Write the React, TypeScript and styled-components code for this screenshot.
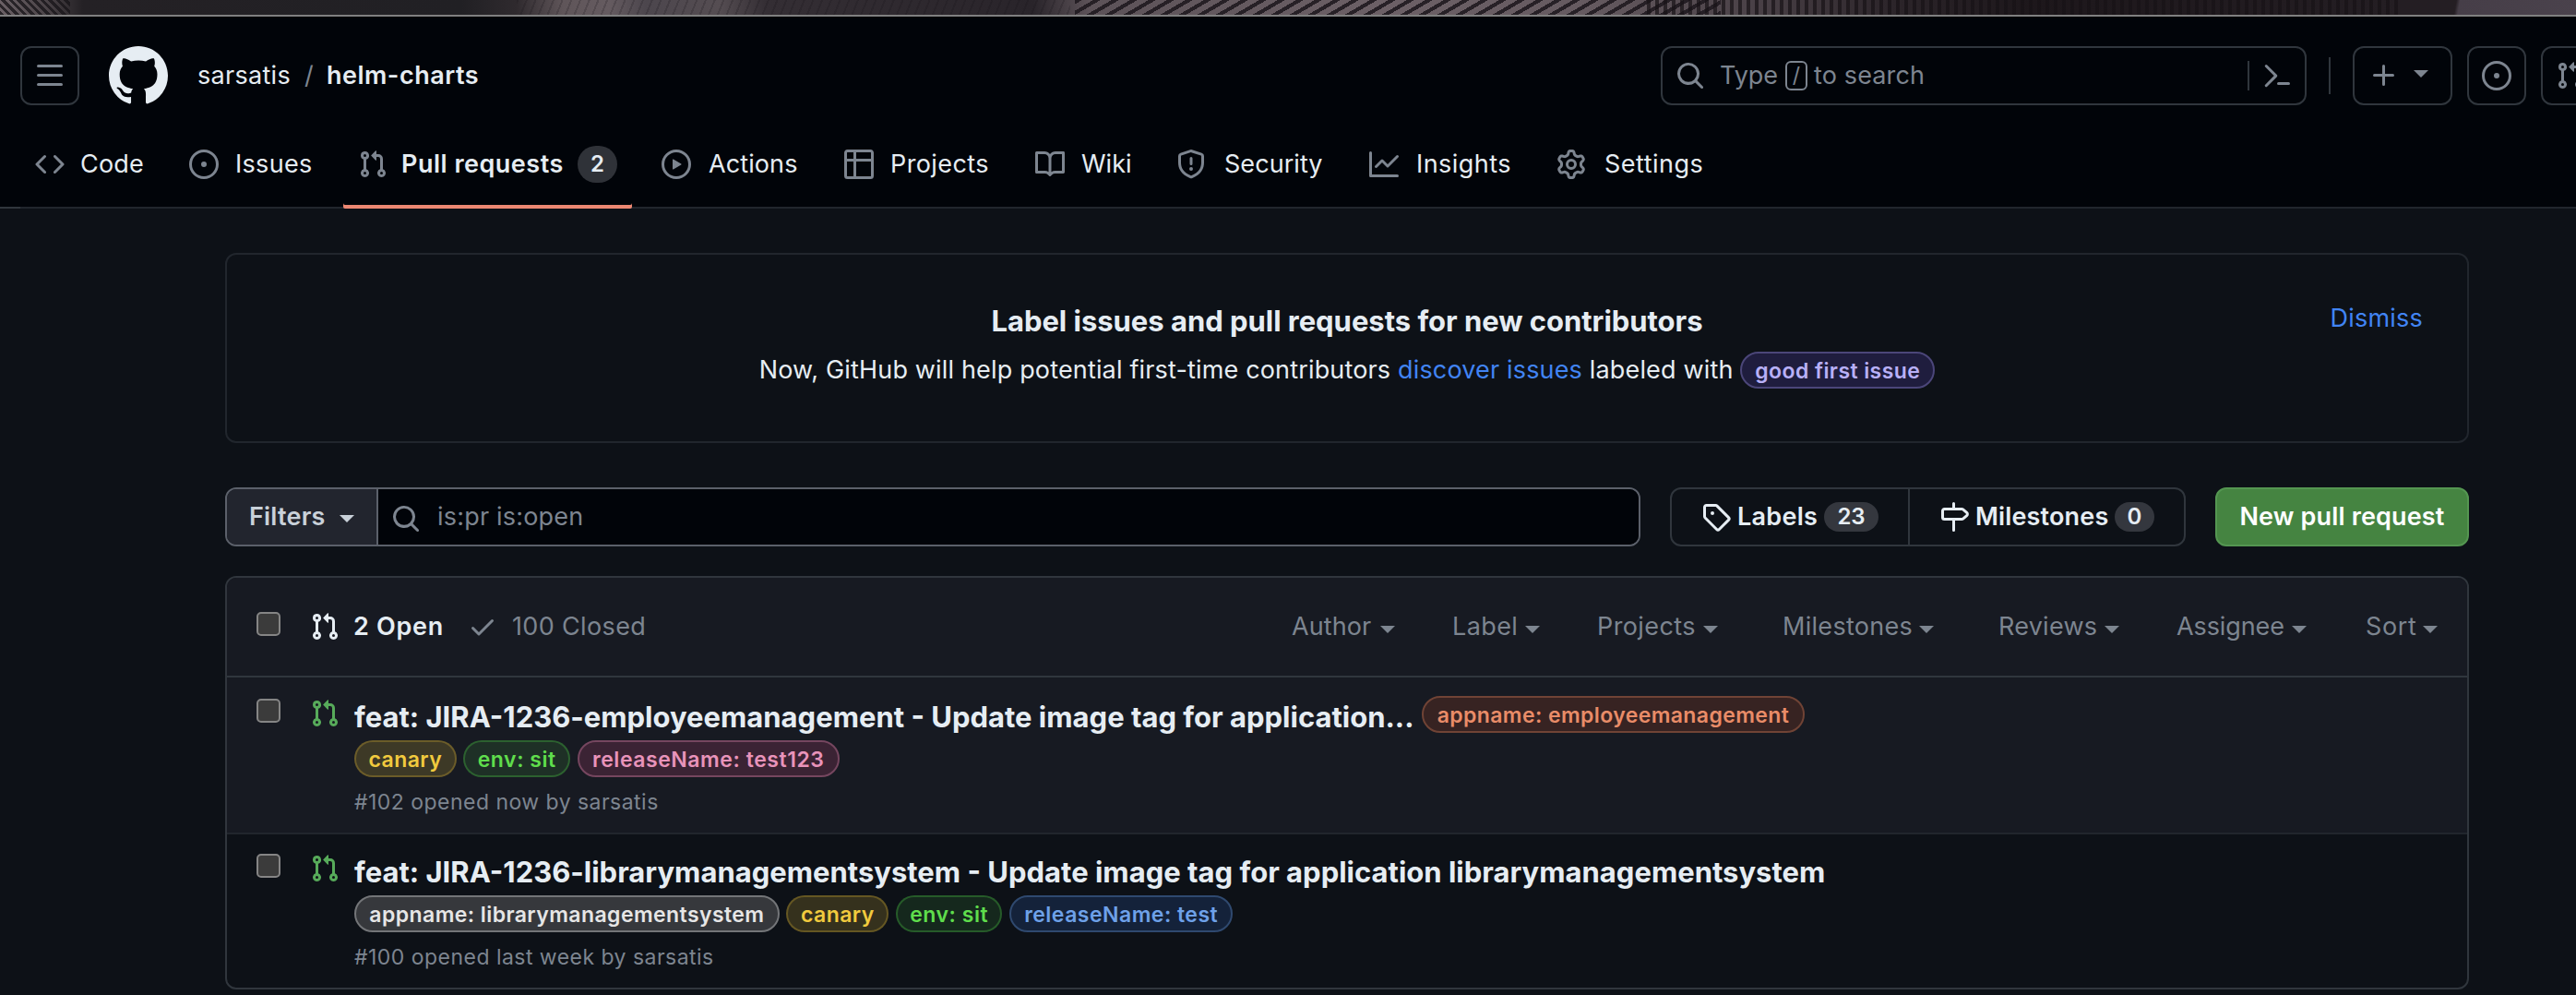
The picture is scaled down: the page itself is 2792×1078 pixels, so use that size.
import React from "react";
import styled, { createGlobalStyle, css } from "styled-components";

const color = {
  canvas: "#0d1117",
  inset: "#010409",
  subtle: "#171a22",
  border: "#30363d",
  borderMuted: "#21262d",
  fg: "#e6edf3",
  muted: "#7d8590",
  link: "#4184f4",
  open: "#57ab5a",
};

const GlobalStyle = createGlobalStyle`
  *, *::before, *::after { box-sizing: border-box; }
  body {
    margin: 0;
    overflow: hidden;
    background: ${color.canvas};
    color: ${color.fg};
    font-family: Inter, "Liberation Sans", sans-serif;
    font-size: 27px;
    line-height: 40px;
  }
`;

/* ---------- icons ---------- */

const paths = {
  bars: "M1 2.75A.75.75 0 0 1 1.75 2h12.5a.75.75 0 0 1 0 1.5H1.75A.75.75 0 0 1 1 2.75Zm0 5A.75.75 0 0 1 1.75 7h12.5a.75.75 0 0 1 0 1.5H1.75A.75.75 0 0 1 1 7.75ZM1.75 12h12.5a.75.75 0 0 1 0 1.5H1.75a.75.75 0 0 1 0-1.5Z",
  mark: "M8 0c4.42 0 8 3.58 8 8a8.013 8.013 0 0 1-5.45 7.59c-.4.08-.55-.17-.55-.38 0-.27.01-1.13.01-2.2 0-.75-.25-1.23-.54-1.48 1.78-.2 3.65-.88 3.65-3.95 0-.88-.31-1.59-.82-2.15.08-.2.36-1.02-.08-2.12 0 0-.67-.22-2.2.82-.64-.18-1.32-.27-2-.27-.68 0-1.36.09-2 .27-1.53-1.03-2.2-.82-2.2-.82-.44 1.1-.16 1.92-.08 2.12-.51.56-.82 1.28-.82 2.15 0 3.06 1.86 3.75 3.64 3.95-.23.2-.44.55-.51 1.07-.46.21-1.61.55-2.33-.66-.15-.24-.6-.83-1.23-.82-.67.01-.27.38.01.53.34.19.73.9.82 1.13.16.45.68 1.31 2.69.94 0 .67.01 1.3.01 1.49 0 .21-.15.45-.55.38A7.995 7.995 0 0 1 0 8c0-4.42 3.58-8 8-8Z",
  code: "m11.28 3.22 4.25 4.25a.75.75 0 0 1 0 1.06l-4.25 4.25a.749.749 0 0 1-1.275-.326.749.749 0 0 1 .215-.734L13.94 8l-3.72-3.72a.749.749 0 0 1 .326-1.275.749.749 0 0 1 .734.215Zm-6.56 0a.751.751 0 0 1 1.042.018.751.751 0 0 1 .018 1.042L2.06 8l3.72 3.72a.749.749 0 0 1-.326 1.275.749.749 0 0 1-.734-.215L.47 8.53a.75.75 0 0 1 0-1.06Z",
  issue: "M8 9.5a1.5 1.5 0 1 0 0-3 1.5 1.5 0 0 0 0 3ZM8 0a8 8 0 1 1 0 16A8 8 0 0 1 8 0ZM1.5 8a6.5 6.5 0 1 0 13 0 6.5 6.5 0 0 0-13 0Z",
  pull: "M1.5 3.25a2.25 2.25 0 1 1 3 2.122v5.256a2.251 2.251 0 1 1-1.5 0V5.372A2.25 2.25 0 0 1 1.5 3.25Zm5.677-.177L9.573.677A.25.25 0 0 1 10 .854V2.5h1A2.5 2.5 0 0 1 13.5 5v5.628a2.251 2.251 0 1 1-1.5 0V5a1 1 0 0 0-1-1h-1v1.646a.25.25 0 0 1-.427.177L7.177 3.427a.25.25 0 0 1 0-.354ZM3.75 2.5a.75.75 0 1 0 0 1.5.75.75 0 0 0 0-1.5Zm0 9.5a.75.75 0 1 0 0 1.5.75.75 0 0 0 0-1.5Zm8.25.75a.75.75 0 1 0 1.5 0 .75.75 0 0 0-1.5 0Z",
  play: "M8 0a8 8 0 1 1 0 16A8 8 0 0 1 8 0ZM1.5 8a6.5 6.5 0 1 0 13 0 6.5 6.5 0 0 0-13 0Zm4.879-2.773 4.264 2.559a.25.25 0 0 1 0 .428l-4.264 2.559A.25.25 0 0 1 6 10.559V5.442a.25.25 0 0 1 .379-.215Z",
  table: "M0 1.75C0 .784.784 0 1.75 0h12.5C15.216 0 16 .784 16 1.75v12.5A1.75 1.75 0 0 1 14.25 16H1.75A1.75 1.75 0 0 1 0 14.25ZM6.5 6.5v8h7.75a.25.25 0 0 0 .25-.25V6.5Zm8-1.5V1.75a.25.25 0 0 0-.25-.25H6.5V5Zm-13 1.5v7.75c0 .138.112.25.25.25H5v-8ZM5 5V1.5H1.75a.25.25 0 0 0-.25.25V5Z",
  book: "M0 1.75A.75.75 0 0 1 .75 1h4.253c1.227 0 2.317.59 3 1.501A3.743 3.743 0 0 1 11.006 1h4.245a.75.75 0 0 1 .75.75v10.5a.75.75 0 0 1-.75.75h-4.507a2.25 2.25 0 0 0-1.591.659l-.622.621a.75.75 0 0 1-1.06 0l-.622-.621A2.25 2.25 0 0 0 5.258 13H.75a.75.75 0 0 1-.75-.75Zm7.251 10.324.004-5.073-.002-2.253A2.25 2.25 0 0 0 5.003 2.5H1.5v9h3.757a3.75 3.75 0 0 1 1.994.574ZM8.755 4.75l-.004 7.322a3.752 3.752 0 0 1 1.992-.572H14.5v-9h-3.495a2.25 2.25 0 0 0-2.25 2.25Z",
  shield: "M7.467.133a1.748 1.748 0 0 1 1.066 0l5.25 1.68A1.75 1.75 0 0 1 15 3.48V7c0 1.566-.32 3.182-1.303 4.682-.983 1.498-2.585 2.813-5.032 3.855a1.697 1.697 0 0 1-1.33 0c-2.447-1.042-4.049-2.357-5.032-3.855C1.32 10.182 1 8.566 1 7V3.48a1.75 1.75 0 0 1 1.217-1.667Zm.61 1.429a.25.25 0 0 0-.153 0l-5.25 1.68a.25.25 0 0 0-.174.238V7c0 1.358.275 2.666 1.057 3.86.784 1.194 2.121 2.34 4.366 3.297a.196.196 0 0 0 .154 0c2.245-.956 3.582-2.104 4.366-3.298C13.225 9.666 13.5 8.36 13.5 7V3.48a.251.251 0 0 0-.174-.237l-5.25-1.68ZM8.75 4.75v3a.75.75 0 0 1-1.5 0v-3a.75.75 0 0 1 1.5 0ZM9 10.5a1 1 0 1 1-2 0 1 1 0 0 1 2 0Z",
  graph: "M1.5 1.75V13.5h13.75a.75.75 0 0 1 0 1.5H.75a.75.75 0 0 1-.75-.75V1.75a.75.75 0 0 1 1.5 0Zm14.28 2.53-5.25 5.25a.75.75 0 0 1-1.06 0L7 7.06 4.28 9.78a.751.751 0 0 1-1.042-.018.751.751 0 0 1-.018-1.042l3.25-3.25a.75.75 0 0 1 1.06 0L10 7.94l4.72-4.72a.751.751 0 0 1 1.042.018.751.751 0 0 1 .018 1.042Z",
  gear: "M8 0a8.2 8.2 0 0 1 .701.031C9.444.095 9.99.645 10.16 1.29l.288 1.107c.018.066.079.158.212.224.231.114.454.243.668.386.123.082.233.09.299.071l1.103-.303c.644-.176 1.392.021 1.82.63.27.385.506.792.704 1.218.315.675.111 1.422-.364 1.891l-.814.806c-.049.048-.098.147-.088.294.016.257.016.515 0 .772-.01.147.038.246.088.294l.814.806c.475.469.679 1.216.364 1.891a7.977 7.977 0 0 1-.704 1.217c-.428.61-1.176.807-1.82.63l-1.102-.302c-.067-.019-.177-.011-.3.071a5.909 5.909 0 0 1-.668.386c-.133.066-.194.158-.211.224l-.29 1.106c-.168.646-.715 1.196-1.458 1.26a8.006 8.006 0 0 1-1.402 0c-.743-.064-1.289-.614-1.458-1.26l-.289-1.106c-.018-.066-.079-.158-.212-.224a5.738 5.738 0 0 1-.668-.386c-.123-.082-.233-.09-.299-.071l-1.103.303c-.644.176-1.392-.021-1.82-.63a8.12 8.12 0 0 1-.704-1.218c-.315-.675-.111-1.422.363-1.891l.815-.806c.05-.048.098-.147.088-.294a6.214 6.214 0 0 1 0-.772c.01-.147-.038-.246-.088-.294l-.815-.806C.635 6.045.431 5.298.746 4.623a7.92 7.92 0 0 1 .704-1.217c.428-.61 1.176-.807 1.82-.63l1.102.302c.067.019.177.011.3-.071.214-.143.437-.272.668-.386.133-.066.194-.158.211-.224l.29-1.106C6.009.645 6.556.095 7.299.03 7.53.01 7.764 0 8 0Zm-.571 1.525c-.036.003-.108.036-.137.146l-.289 1.105c-.147.561-.549.967-.998 1.189-.173.086-.34.183-.5.29-.417.278-.97.423-1.529.27l-1.103-.303c-.109-.03-.175.016-.195.045-.22.312-.412.644-.573.99-.014.031-.021.11.059.19l.815.806c.411.406.562.957.53 1.456a4.709 4.709 0 0 0 0 .582c.032.499-.119 1.05-.53 1.456l-.815.806c-.081.08-.073.159-.059.19.162.346.353.677.573.989.02.03.085.076.195.046l1.102-.303c.56-.153 1.113-.008 1.53.27.161.107.328.204.501.29.447.222.85.629.997 1.189l.289 1.105c.029.109.101.143.137.146a6.6 6.6 0 0 0 1.142 0c.036-.003.108-.036.137-.146l.289-1.105c.147-.561.549-.967.998-1.189.173-.086.34-.183.5-.29.417-.278.97-.423 1.529-.27l1.103.303c.109.029.175-.016.195-.045.22-.313.411-.644.573-.99.014-.031.021-.11-.059-.19l-.815-.806c-.411-.406-.562-.957-.53-1.456a4.709 4.709 0 0 0 0-.582c-.032-.499.119-1.05.53-1.456l.815-.806c.081-.08.073-.159.059-.19a6.464 6.464 0 0 0-.573-.989c-.02-.03-.085-.076-.195-.046l-1.102.303c-.56.153-1.113.008-1.53-.27a4.44 4.44 0 0 0-.501-.29c-.447-.222-.85-.629-.997-1.189l-.289-1.105c-.029-.11-.101-.143-.137-.146a6.6 6.6 0 0 0-1.142 0ZM11 8a3 3 0 1 1-6 0 3 3 0 0 1 6 0ZM9.5 8a1.5 1.5 0 1 0-3.001.001A1.5 1.5 0 0 0 9.5 8Z",
  search: "M10.68 11.74a6 6 0 0 1-7.922-8.982 6 6 0 0 1 8.982 7.922l3.04 3.04a.749.749 0 0 1-.326 1.275.749.749 0 0 1-.734-.215ZM11.5 7a4.499 4.499 0 1 0-8.997 0A4.499 4.499 0 0 0 11.5 7Z",
  terminal: "m6.354 8.04-4.773 4.773a.75.75 0 1 0 1.061 1.06L7.945 8.57a.75.75 0 0 0 0-1.06L2.642 2.206a.75.75 0 0 0-1.06 1.061L6.353 8.04ZM8.75 11.5a.75.75 0 0 0 0 1.5h5.5a.75.75 0 0 0 0-1.5h-5.5Z",
  plus: "M7.75 2a.75.75 0 0 1 .75.75V7h4.25a.75.75 0 0 1 0 1.5H8.5v4.25a.75.75 0 0 1-1.5 0V8.5H2.75a.75.75 0 0 1 0-1.5H7V2.75A.75.75 0 0 1 7.75 2Z",
  tag: "M1 7.775V2.75C1 1.784 1.784 1 2.75 1h5.025c.464 0 .91.184 1.238.513l6.25 6.25a1.75 1.75 0 0 1 0 2.474l-5.026 5.026a1.75 1.75 0 0 1-2.474 0l-6.25-6.25A1.752 1.752 0 0 1 1 7.775Zm1.5 0c0 .066.026.13.073.177l6.25 6.25a.25.25 0 0 0 .354 0l5.025-5.025a.25.25 0 0 0 0-.354l-6.25-6.25a.25.25 0 0 0-.177-.073H2.75a.25.25 0 0 0-.25.25ZM6 5a1 1 0 1 1 0 2 1 1 0 0 1 0-2Z",
  milestone: "M7.75 0a.75.75 0 0 1 .75.75V3h3.634c.414 0 .814.147 1.13.414l2.07 1.75a1.75 1.75 0 0 1 0 2.672l-2.07 1.75a1.75 1.75 0 0 1-1.13.414H8.5v5.25a.75.75 0 0 1-1.5 0V10H2.75A1.75 1.75 0 0 1 1 8.25v-3.5C1 3.784 1.784 3 2.75 3H7V.75A.75.75 0 0 1 7.75 0Zm4.384 8.5a.25.25 0 0 0 .161-.06l2.07-1.75a.248.248 0 0 0 0-.38l-2.07-1.75a.25.25 0 0 0-.161-.06H2.75a.25.25 0 0 0-.25.25v3.5c0 .138.112.25.25.25h9.384Z",
  check: "M13.78 4.22a.75.75 0 0 1 0 1.06l-7.25 7.25a.75.75 0 0 1-1.06 0L2.22 9.28a.751.751 0 0 1 .018-1.042.751.751 0 0 1 1.042-.018L6 10.94l6.72-6.72a.75.75 0 0 1 1.06 0Z",
};

const Svg = styled.svg<{ $size: number; $tone: string }>`
  display: block;
  flex: none;
  width: ${(p) => p.$size}px;
  height: ${(p) => p.$size}px;
  fill: ${(p) => p.$tone};
`;

function Icon({ name, size = 32, tone = color.muted }: { name: keyof typeof paths; size?: number; tone?: string }) {
  return (
    <Svg viewBox="0 0 16 16" $size={size} $tone={tone} aria-hidden="true">
      <path d={paths[name]} />
    </Svg>
  );
}

/* ---------- shared parts ---------- */

const Text = styled.span<{ $track?: number; $width?: number; $weight?: number; $tone?: string }>`
  flex: none;
  white-space: nowrap;
  letter-spacing: ${(p) => p.$track ?? 0.3}px;
  font-weight: ${(p) => p.$weight ?? 400};
  ${(p) => p.$width && css`width: ${p.$width}px;`}
  ${(p) => p.$tone && css`color: ${p.$tone};`}
`;

const Caret = styled.span`
  flex: none;
  width: 0;
  height: 0;
  border: 8px solid transparent;
  border-top-color: currentColor;
  border-bottom-width: 0;
`;

const Pill = styled.span<{ $width: number; $fg: string; $bg: string; $edge: string; $track?: number }>`
  flex: none;
  width: ${(p) => p.$width}px;
  height: 40px;
  border: 2px solid ${(p) => p.$edge};
  border-radius: 20px;
  background: ${(p) => p.$bg};
  color: ${(p) => p.$fg};
  font-size: 23px;
  font-weight: 600;
  line-height: 38px;
  letter-spacing: ${(p) => p.$track ?? 0.42}px;
  text-align: center;
  white-space: nowrap;
`;

const Counter = styled.span<{ $width: number; $height: number }>`
  flex: none;
  width: ${(p) => p.$width}px;
  height: ${(p) => p.$height}px;
  border-radius: 20px;
  background: #34373e;
  color: ${color.fg};
  font-size: 24px;
  font-weight: 600;
  line-height: ${(p) => p.$height}px;
  text-align: center;
`;

/* ---------- top strip and header ---------- */

const WallpaperStrip = styled.div`
  height: 18px;
  border-bottom: 2px solid #808080;
  background:
    linear-gradient(100deg, transparent 2622px, #463e48 2626px, #4a424c 100%),
    repeating-linear-gradient(90deg, transparent 0 5px, rgba(23, 18, 22, 0.7) 5px 9px) 1780px 0 / 820px 16px no-repeat,
    repeating-linear-gradient(150deg, rgba(32, 26, 32, 0.9) 0 4px, transparent 4px 10px) 1165px 0 / 700px 16px no-repeat,
    repeating-linear-gradient(45deg, rgba(25, 22, 26, 0.8) 0 3px, transparent 3px 6px) 0 0 / 76px 16px no-repeat,
    repeating-linear-gradient(112deg, rgba(20, 16, 22, 0.2) 0 2px, transparent 2px 9px) 560px 0 / 600px 16px no-repeat,
    linear-gradient(90deg, #6a6065 0, #4a4347 50px, #242125 90px, #212024 500px, #2f2a2e 560px, #5f5559 610px, #655b60 660px,
      #4c464d 700px, #554d52 780px, #342e34 830px, #29242a 1120px, #5c5258 1180px, #6c6066 1500px, #655a60 1720px,
      #4a4147 1900px, #2c252a 2050px, #1d171b 2200px, #241e23 2600px);
`;

const Header = styled.header`
  height: 208px;
  background:
    linear-gradient(90deg, ${color.border} 22px, ${color.borderMuted} 22px) 0 100% / 100% 2px no-repeat,
    ${color.inset};
`;

const TopBar = styled.div`
  display: flex;
  align-items: center;
  height: 128px;
  padding-left: 22px;
`;

const HeaderButton = styled.button<{ $width?: number }>`
  flex: none;
  display: flex;
  align-items: center;
  justify-content: center;
  width: ${(p) => p.$width ?? 64}px;
  height: 64px;
  padding: 0;
  border: 2px solid ${color.border};
  border-radius: 12px;
  background: transparent;
  color: ${color.muted};
`;

const PlusCaret = styled(Caret)`
  margin: -4px 8px 0 16px;
`;

const Crumbs = styled.div`
  display: flex;
  flex: none;
  align-items: center;
  width: 1714px;
  padding-left: 32px;
`;

const CrumbTrail = styled.div`
  display: flex;
  padding-left: 32px;
`;

const GlobalSearch = styled.div`
  flex: none;
  display: flex;
  align-items: center;
  width: 700px;
  height: 64px;
  padding: 0 14px;
  border: 2px solid ${color.border};
  border-radius: 12px;
  color: ${color.muted};
`;

const SearchText = styled.div`
  display: flex;
  align-items: center;
  flex: 1;
  padding-left: 16px;
`;

const Key = styled.kbd`
  width: 24px;
  height: 32px;
  margin-right: 7px;
  border: 2px solid ${color.muted};
  border-radius: 6px;
  font: 400 23px/28px Inter, sans-serif;
  text-align: center;
`;

const Rule = styled.span<{ $height: number; $left: number; $right: number }>`
  flex: none;
  width: 2px;
  height: ${(p) => p.$height}px;
  margin: 0 ${(p) => p.$right}px 0 ${(p) => p.$left}px;
  background: ${color.border};
`;

const HeaderActions = styled.div`
  display: flex;
  align-items: center;
  gap: 16px;
`;

const Nav = styled.nav`
  display: flex;
  gap: 16px;
  height: 80px;
  padding-left: 22px;
`;

const NavItem = styled.a<{ $current?: boolean }>`
  flex: none;
  display: flex;
  align-items: center;
  height: 80px;
  padding: 0 16px 16px;
  ${(p) => p.$current && css`
    box-shadow: inset 0 -4px 0 #ec8772;
    border-radius: 2px;
  `}
`;

const NavLabel = styled(Text)<{ $nudge: number }>`
  margin-left: ${(p) => 16 + p.$nudge}px;
  margin-right: ${(p) => -p.$nudge}px;
`;

const NavCounter = styled(Counter)`
  margin-left: 16px;
  background: #2f3238;
`;

/* ---------- page body ---------- */

const Page = styled.main`
  width: 2432px;
  margin: 48px 0 0 244px;
`;

const Banner = styled.section`
  display: grid;
  grid-template-columns: 150px 1fr 150px;
  height: 206px;
  padding-top: 48px;
  border: 2px solid ${color.borderMuted};
  border-radius: 12px;
`;

const BannerBody = styled.div`
  grid-column: 2;
  display: flex;
  flex-direction: column;
  align-items: center;
`;

const BannerTitle = styled.h3`
  margin: 0 0 9px;
  font-size: 31px;
  font-weight: 650;
  line-height: 48px;
  letter-spacing: -0.03px;
`;

const BannerText = styled.p`
  display: flex;
  margin: 0;
  line-height: 39px;
  letter-spacing: 0.16px;
  white-space: pre;
`;

const Link = styled.a`
  color: ${color.link};
`;

const Dismiss = styled(Link)`
  padding: 0 48px 0 0;
  justify-self: end;
  line-height: 42px;
  letter-spacing: 0.21px;
`;

const Toolbar = styled.div`
  display: flex;
  margin-top: 48px;
`;

const SearchGroup = styled.div`
  display: flex;
  width: 1534px;
  height: 64px;
  border: 2px solid #5b606a;
  border-radius: 12px;
  overflow: hidden;
`;

const FilterButton = styled.div`
  display: flex;
  align-items: center;
  width: 164px;
  padding-left: 24px;
  border-right: 2px solid #5b606a;
  background: #22252e;
  color: #c9d1d9;
`;

const FilterCaret = styled(Caret)`
  margin-top: 4px;
`;

const FilterInput = styled.div`
  flex: 1;
  display: flex;
  align-items: center;
  gap: 18px;
  padding-left: 14px;
  background: ${color.inset};
  color: ${color.muted};

  svg { margin-top: 4px; }
`;

const Subnav = styled.div`
  display: flex;
  width: 559px;
  height: 64px;
  margin: 0 32px;
  border: 2px solid ${color.border};
  border-radius: 12px;
`;

const SubnavItem = styled.a<{ $width: number; $pad: number }>`
  display: flex;
  align-items: center;
  width: ${(p) => p.$width}px;
  padding-left: ${(p) => p.$pad}px;

  svg { margin-right: 7px; }
  & + & { border-left: 2px solid ${color.border}; }
`;

const PrimaryButton = styled.button`
  flex: 1;
  height: 64px;
  padding: 0;
  border: 2px solid #549651;
  border-radius: 12px;
  background: #458441;
  color: #fff;
  font: 600 27px/58px Inter, sans-serif;
  letter-spacing: 0.15px;
`;

/* ---------- list ---------- */

const List = styled.section`
  height: 448px;
  margin-top: 32px;
  border: 2px solid ${color.border};
  border-radius: 12px;
  overflow: hidden;
`;

const Checkbox = styled.span<{ $shift?: number }>`
  flex: none;
  width: 26px;
  height: 26px;
  margin-top: ${(p) => p.$shift ?? 0}px;
  border: 2px solid #858585;
  border-radius: 5px;
  background: #3b3b3b;
`;

const ListHeader = styled.div`
  display: flex;
  align-items: center;
  height: 108px;
  padding: 0 32px;
  border-bottom: 2px solid ${color.border};
  background: ${color.subtle};
  color: ${color.muted};
`;

const States = styled.div`
  display: flex;
  align-items: center;
  flex: 1;
  padding-left: 32px;
`;

const StateLink = styled.a<{ $gap: number; $width: number }>`
  display: flex;
  align-items: center;
  gap: ${(p) => p.$gap}px;
  width: ${(p) => p.$width}px;
`;

const Menus = styled.div`
  display: flex;
`;

const Menu = styled.a<{ $lead: number }>`
  display: flex;
  align-items: center;
  margin-left: ${(p) => p.$lead}px;

  ${Caret} { margin-top: 6px; }
`;

const Row = styled.article<{ $hover?: boolean }>`
  display: flex;
  height: 168px;
  padding: 20px 32px 0;
  background: ${(p) => (p.$hover ? color.subtle : "transparent")};

  & + & {
    padding-top: 18px;
    border-top: 2px solid ${color.borderMuted};
  }
`;

const RowIcon = styled.div`
  width: 80px;
  padding: 3px 0 0 32px;
`;

const RowBody = styled.div`
  display: flex;
  flex-direction: column;
`;

const TitleLine = styled.div`
  display: flex;
  gap: 8px;
  height: 48px;
`;

const Title = styled.a<{ $width?: number }>`
  ${(p) => p.$width && css`width: ${p.$width}px;`}
  font-size: 31px;
  font-weight: 650;
  line-height: 45px;
  letter-spacing: 0px;
  white-space: nowrap;
`;

const PillLine = styled.div`
  display: flex;
  gap: 7.7px;
`;

const Meta = styled.div`
  margin-top: 9px;
  color: ${color.muted};
  font-size: 23px;
  line-height: 36px;
  letter-spacing: 0.47px;
`;

/* ---------- data ---------- */

const navItems: { icon: keyof typeof paths; label: string; width: number; track: number; nudge: number; count?: number }[] = [
  { icon: "code", label: "Code", width: 71, track: 0.2, nudge: 1 },
  { icon: "issue", label: "Issues", width: 87, track: 0.3, nudge: 2 },
  { icon: "pull", label: "Pull requests", width: 174, track: 0.5, nudge: -1, count: 2 },
  { icon: "play", label: "Actions", width: 102, track: 0.1, nudge: 3 },
  { icon: "table", label: "Projects", width: 111, track: 0.4, nudge: 2 },
  { icon: "book", label: "Wiki", width: 57, track: 0, nudge: 2 },
  { icon: "shield", label: "Security", width: 113, track: 0.05, nudge: 4 },
  { icon: "graph", label: "Insights", width: 107, track: 0.45, nudge: 3 },
  { icon: "gear", label: "Settings", width: 112, track: 0.5, nudge: 4 },
];

const menus = [
  { label: "Author", width: 96, track: 0.1, lead: 0 },
  { label: "Label", width: 79, track: 0.4, lead: 62 },
  { label: "Projects", width: 115, track: 0.4, lead: 62 },
  { label: "Milestones", width: 148, track: 0.3, lead: 70 },
  { label: "Reviews", width: 115, track: 0.25, lead: 70 },
  { label: "Assignee", width: 125, track: -0.1, lead: 62 },
  { label: "Sort", width: 62, track: 0.6, lead: 64 },
];

const tones = {
  orange: { $fg: "#e98c68", $bg: "#372322", $edge: "#704335" },
  yellow: { $fg: "#f1ca3e", $bg: "rgba(241, 202, 62, 0.18)", $edge: "rgba(225, 182, 50, 0.28)" },
  green: { $fg: "#5fdd4c", $bg: "rgba(80, 210, 70, 0.12)", $edge: "rgba(80, 210, 70, 0.3)" },
  pink: { $fg: "#e893ba", $bg: "#3b2334", $edge: "#75465f" },
  gray: { $fg: "#e6e6e6", $bg: "#36383c", $edge: "#737578" },
  blue: { $fg: "#6ea1e9", $bg: "#14223a", $edge: "#2f496f" },
  purple: { $fg: "#b8b0f7", $bg: "#1f1d3e", $edge: "#4b4679" },
};

/* ---------- app ---------- */

export default function App() {
  return (
    <>
      <GlobalStyle />
      <WallpaperStrip />
      <Header>
        <TopBar>
          <HeaderButton aria-label="Menu"><Icon name="bars" /></HeaderButton>
          <Crumbs>
            <Icon name="mark" size={64} tone="#e6edf3" />
            <CrumbTrail>
              <Text $width={116} $track={0.3}>sarsatis</Text>
              <Text $width={24} $tone={color.muted}>/</Text>
              <Text $weight={600} $track={0.5}>helm-charts</Text>
            </CrumbTrail>
          </Crumbs>
          <GlobalSearch>
            <Icon name="search" />
            <SearchText>
              <Text $width={71} $track={-0.1}>Type</Text>
              <Key>/</Key>
              <Text $track={0.14}>to search</Text>
            </SearchText>
            <Rule $height={32} $left={0} $right={14} />
            <Icon name="terminal" />
          </GlobalSearch>
          <Rule $height={40} $left={24} $right={24} />
          <HeaderActions>
            <HeaderButton $width={108} aria-label="Create">
              <Icon name="plus" />
              <PlusCaret />
            </HeaderButton>
            <HeaderButton aria-label="Issues"><Icon name="issue" /></HeaderButton>
            <HeaderButton aria-label="Pull requests"><Icon name="pull" /></HeaderButton>
          </HeaderActions>
        </TopBar>
        <Nav>
          {navItems.map((item) => (
            <NavItem key={item.label} $current={item.count !== undefined}>
              <Icon name={item.icon} />
              <NavLabel $nudge={item.nudge} $width={item.width} $track={item.track} $weight={item.count ? 600 : 400}>
                {item.label}
              </NavLabel>
              {item.count && <NavCounter $width={43} $height={40}>{item.count}</NavCounter>}
            </NavItem>
          ))}
        </Nav>
      </Header>

      <Page>
        <Banner>
          <BannerBody>
            <BannerTitle>Label issues and pull requests for new contributors</BannerTitle>
            <BannerText>
              <span>Now, GitHub will help potential first-time contributors </span>
              <Link>discover issues</Link>
              <span> labeled with </span>
              <Pill $width={211} $track={0.42} {...tones.purple}>good first issue</Pill>
            </BannerText>
          </BannerBody>
          <Dismiss>Dismiss</Dismiss>
        </Banner>

        <Toolbar>
          <SearchGroup>
            <FilterButton>
              <Text $width={98} $weight={600} $track={0.2}>Filters</Text>
              <FilterCaret />
            </FilterButton>
            <FilterInput>
              <Icon name="search" />
              <Text $track={0.2}>is:pr is:open</Text>
            </FilterInput>
          </SearchGroup>
          <Subnav>
            <SubnavItem $width={256} $pad={32}>
              <Icon name="tag" tone={color.fg} />
              <Text $width={94} $weight={600} $track={0.27}>Labels</Text>
              <Counter $width={59} $height={32}>23</Counter>
            </SubnavItem>
            <SubnavItem $width={299} $pad={32}>
              <Icon name="milestone" tone={color.fg} />
              <Text $width={151} $weight={600} $track={0.15}>Milestones</Text>
              <Counter $width={43} $height={32}>0</Counter>
            </SubnavItem>
          </Subnav>
          <PrimaryButton>New pull request</PrimaryButton>
        </Toolbar>

        <List>
          <ListHeader>
            <Checkbox $shift={-6} />
            <States>
              <StateLink $gap={15} $width={171}>
                <Icon name="pull" tone={color.fg} />
                <Text $weight={600} $track={0.7} $tone={color.fg}>2 Open</Text>
              </StateLink>
              <StateLink $gap={16} $width={200}>
                <Icon name="check" />
                <Text $track={0.35}>100 Closed</Text>
              </StateLink>
            </States>
            <Menus>
              {menus.map((m) => (
                <Menu key={m.label} $lead={m.lead}>
                  <Text $width={m.width} $track={m.track}>{m.label}</Text>
                  <Caret />
                </Menu>
              ))}
            </Menus>
          </ListHeader>

          <Row $hover>
            <Checkbox $shift={3} />
            <RowIcon><Icon name="pull" tone={color.open} /></RowIcon>
            <RowBody>
              <TitleLine>
                <Title $width={1149}>feat: JIRA-1236-employeemanagement - Update image tag for application...</Title>
                <Pill $width={415} $track={0.4} {...tones.orange}>appname: employeemanagement</Pill>
              </TitleLine>
              <PillLine>
                <Pill $width={110.8} {...tones.yellow}>canary</Pill>
                <Pill $width={115.5} $track={0.55} {...tones.green}>env: sit</Pill>
                <Pill $width={284.2} $track={0.55} {...tones.pink}>releaseName: test123</Pill>
              </PillLine>
              <Meta>#102 opened now by sarsatis</Meta>
            </RowBody>
          </Row>

          <Row>
            <Checkbox $shift={3} />
            <RowIcon><Icon name="pull" tone={color.open} /></RowIcon>
            <RowBody>
              <TitleLine>
                <Title>feat: JIRA-1236-librarymanagementsystem - Update image tag for application librarymanagementsystem</Title>
              </TitleLine>
              <PillLine>
                <Pill $width={460.8} {...tones.gray}>appname: librarymanagementsystem</Pill>
                <Pill $width={110.8} {...tones.yellow}>canary</Pill>
                <Pill $width={115.5} $track={0.55} {...tones.green}>env: sit</Pill>
                <Pill $width={242} $track={0.48} {...tones.blue}>releaseName: test</Pill>
              </PillLine>
              <Meta>#100 opened last week by sarsatis</Meta>
            </RowBody>
          </Row>
        </List>
      </Page>
    </>
  );
}
